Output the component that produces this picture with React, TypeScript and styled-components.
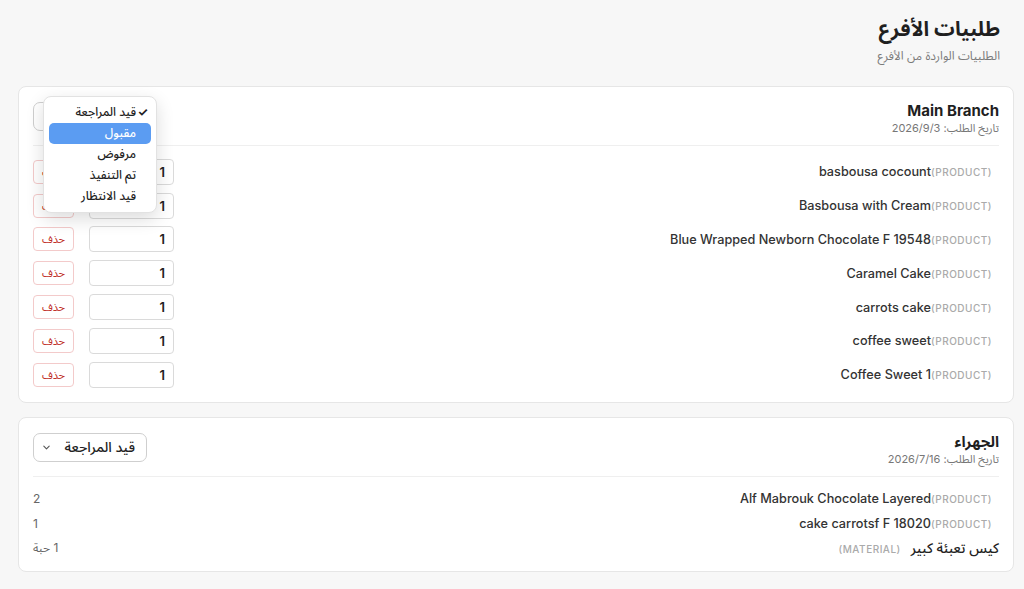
import React from 'react';
import styled, { createGlobalStyle } from 'styled-components';

const GlobalStyle = createGlobalStyle`
  html, body {
    margin: 0;
    padding: 0;
    background: #f7f7f7;
  }
  body {
    font-family: Inter, "Noto Sans Arabic", "Noto Sans", "DejaVu Sans", sans-serif;
    color: #222;
  }
`;

interface OrderItem {
  name: string;
  kind: 'PRODUCT' | 'MATERIAL';
  qty: string;
}

interface BranchOrder {
  branch: string;
  date: string;
  editable: boolean;
  menuOpen?: boolean;
  items: OrderItem[];
}

const STATUSES = ['قيد المراجعة', 'مقبول', 'مرفوض', 'تم التنفيذ', 'قيد الانتظار'];

const orders: BranchOrder[] = [
  {
    branch: 'Main Branch',
    date: '2026/9/3',
    editable: true,
    menuOpen: true,
    items: [
      { name: 'basbousa cocount', kind: 'PRODUCT', qty: '1' },
      { name: 'Basbousa with Cream', kind: 'PRODUCT', qty: '1' },
      { name: 'Blue Wrapped Newborn Chocolate F 19548', kind: 'PRODUCT', qty: '1' },
      { name: 'Caramel Cake', kind: 'PRODUCT', qty: '1' },
      { name: 'carrots cake', kind: 'PRODUCT', qty: '1' },
      { name: 'coffee sweet', kind: 'PRODUCT', qty: '1' },
      { name: 'Coffee Sweet 1', kind: 'PRODUCT', qty: '1' }
    ]
  },
  {
    branch: 'الجهراء',
    date: '2026/7/16',
    editable: false,
    items: [
      { name: 'Alf Mabrouk Chocolate Layered', kind: 'PRODUCT', qty: '2' },
      { name: 'cake carrotsf F 18020', kind: 'PRODUCT', qty: '1' },
      { name: 'كيس تعبئة كبير', kind: 'MATERIAL', qty: '1 حبة' }
    ]
  }
];

const Page = styled.div`
  direction: rtl;
  padding: 14px 10px 20px 18px;
`;

const PageHeader = styled.header`
  padding: 0 14px 0 0;
  margin-bottom: 21px;
`;

const Title = styled.h1`
  margin: 0;
  font-size: 20.5px;
  line-height: 30px;
  font-weight: 700;
  color: #1f1f1f;
`;

const Subtitle = styled.p`
  margin: 3px 0 0;
  font-size: 12px;
  line-height: 18px;
  color: #7a7a7a;
`;

const Card = styled.section`
  background: #fff;
  border: 1px solid #e6e6e6;
  border-radius: 8px;
  padding: 0 14px;
  margin-bottom: 14px;
`;

const CardHeader = styled.div`
  display: flex;
  justify-content: space-between;
  align-items: flex-start;
  padding: 14px 0 9px;
  border-bottom: 1px solid #efefef;
`;

const BranchName = styled.div`
  font-size: 15px;
  line-height: 20px;
  font-weight: 700;
  color: #1f1f1f;
`;

const OrderDate = styled.div`
  font-size: 11px;
  line-height: 16px;
  color: #777;
  margin-top: -1px;
`;

const SelectWrap = styled.div`
  position: relative;
  margin-top: 1px;
`;

const StatusSelect = styled.div<{ $open?: boolean }>`
  display: flex;
  align-items: center;
  justify-content: space-between;
  width: 114px;
  height: 29px;
  box-sizing: border-box;
  padding: 0 11px 0 8px;
  border: 1px solid #cfcfcf;
  border-radius: 7px;
  background: #fff;
  font-size: 14px;
  font-weight: 500;
  color: #222;

  & > span {
    visibility: ${({ $open }) => ($open ? 'hidden' : 'visible')};
  }
`;

const Menu = styled.div`
  position: absolute;
  top: -6px;
  left: 10px;
  width: 114px;
  box-sizing: border-box;
  padding: 5px;
  background: #fff;
  border-radius: 8px;
  border: 1px solid #e2e2e2;
  box-shadow: 0 6px 18px rgba(0, 0, 0, 0.14);
  z-index: 10;
`;

const MenuItem = styled.div<{ $active?: boolean }>`
  position: relative;
  display: flex;
  align-items: center;
  height: 21px;
  padding-right: 15px;
  border-radius: 5px;
  font-size: 12px;
  font-weight: 500;
  color: ${({ $active }) => ($active ? '#fff' : '#222')};
  background: ${({ $active }) => ($active ? '#5b9cf2' : 'transparent')};
`;

const Check = styled.span`
  position: absolute;
  right: 3px;
  top: 2px;
  font-size: 12px;
  font-weight: 700;
`;

const ItemList = styled.div`
  padding: 9px 0 10px;
`;

const Row = styled.div<{ $compact?: boolean }>`
  display: flex;
  align-items: center;
  justify-content: space-between;
  height: ${({ $compact }) => ($compact ? '25px' : '33.8px')};
  padding-right: 7px;
`;

const ItemName = styled.div`
  display: flex;
  align-items: baseline;
  font-size: 12.7px;
  font-weight: 500;
  color: #333;
`;

const Kind = styled.span<{ $material?: boolean }>`
  font-size: 10px;
  letter-spacing: 0.5px;
  color: #aaa;
  margin-right: ${({ $material }) => ($material ? '10px' : '0')};
  direction: ltr;
`;

const ArabicName = styled.span`
  font-size: 14px;
  font-weight: 500;
  color: #222;
  margin-right: -7px;
`;

const Controls = styled.div`
  display: flex;
  align-items: center;
  gap: 15px;
`;

const QtyInput = styled.div`
  width: 85px;
  height: 26px;
  box-sizing: border-box;
  border: 1px solid #dadada;
  border-radius: 4px;
  padding: 0 8px;
  display: flex;
  align-items: center;
  font-size: 13px;
  font-weight: 600;
  color: #222;
`;

const DeleteButton = styled.button`
  width: 41px;
  height: 24px;
  padding: 0;
  border: 1px solid #f3caca;
  border-radius: 4px;
  background: #fff;
  color: #c0302a;
  font-family: inherit;
  font-size: 11px;
`;

const Qty = styled.div`
  font-size: 12px;
  color: #666;
`;

const Chevron = () => (
  <svg width="9" height="9" viewBox="0 0 10 10" fill="none">
    <path d="M2 3.5l3 3 3-3" stroke="#555" strokeWidth="1.2" strokeLinecap="round" strokeLinejoin="round" />
  </svg>
);

const OrderCard = ({ order }: { order: BranchOrder }) => (
  <Card>
    <CardHeader>
      <div>
        <BranchName>{order.branch}</BranchName>
        <OrderDate>تاريخ الطلب: {order.date}</OrderDate>
      </div>
      <SelectWrap>
        <StatusSelect $open={order.menuOpen}>
          <span>{STATUSES[0]}</span>
          <Chevron />
        </StatusSelect>
        {order.menuOpen && (
          <Menu>
            {STATUSES.map((s, i) => (
              <MenuItem key={s} $active={i === 1}>
                {i === 0 && <Check>✓</Check>}
                {s}
              </MenuItem>
            ))}
          </Menu>
        )}
      </SelectWrap>
    </CardHeader>
    <ItemList>
      {order.items.map(item => (
        <Row key={item.name} $compact={!order.editable}>
          {item.kind === 'MATERIAL' ? (
            <ItemName>
              <ArabicName>{item.name}</ArabicName>
              <Kind $material>(MATERIAL)</Kind>
            </ItemName>
          ) : (
            <ItemName style={{ direction: 'ltr' }}>
              {item.name}
              <Kind>(PRODUCT)</Kind>
            </ItemName>
          )}
          {order.editable ? (
            <Controls>
              <QtyInput>{item.qty}</QtyInput>
              <DeleteButton>حذف</DeleteButton>
            </Controls>
          ) : (
            <Qty>{item.qty}</Qty>
          )}
        </Row>
      ))}
    </ItemList>
  </Card>
);

const App = () => (
  <>
    <GlobalStyle />
    <Page>
      <PageHeader>
        <Title>طلبيات الأفرع</Title>
        <Subtitle>الطلبيات الواردة من الأفرع</Subtitle>
      </PageHeader>
      {orders.map(o => (
        <OrderCard key={o.branch} order={o} />
      ))}
    </Page>
  </>
);

export default App;
